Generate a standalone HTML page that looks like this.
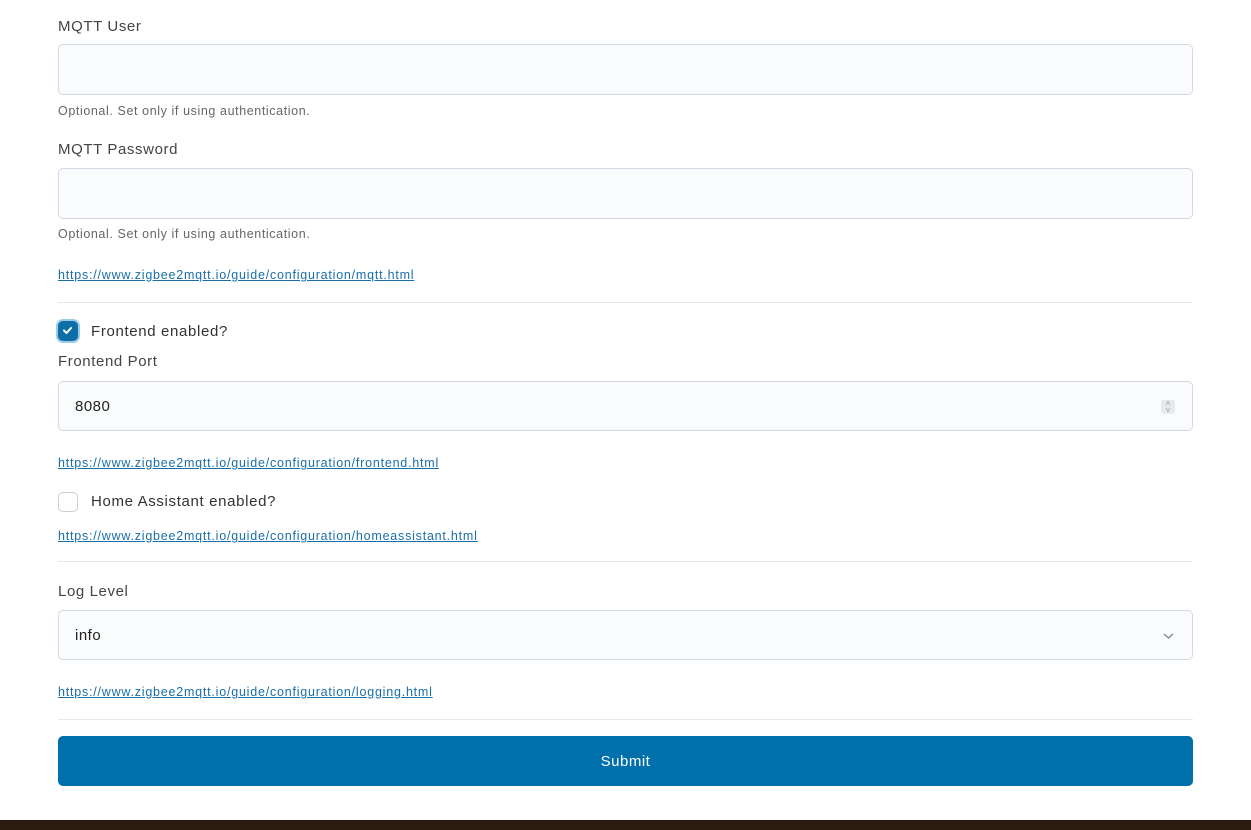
<!DOCTYPE html>
<html><head><style>
*{box-sizing:border-box;margin:0;padding:0}
body{width:1251px;height:830px;background:#fff;position:relative;overflow:hidden;font-family:"Liberation Sans",sans-serif;color:#3c3c3c}
.a{position:absolute;left:58px}
.lbl{font-size:15px;color:#444;line-height:18px;letter-spacing:0.6px}
.inp{width:1135px;height:51px;border:1px solid #d3d8e6;border-radius:5px;background:#fafbfc;font-size:15px;color:#222;padding:0 16px;line-height:51px;letter-spacing:0.5px}
.help{font-size:12.5px;color:#666;line-height:14px;letter-spacing:0.6px}
.lnk{font-size:12.5px;color:#1a6ea8;text-decoration:underline;line-height:14px;letter-spacing:0.78px}
.hr{width:1135px;height:1px;background:#e8e8ec}
.cb{width:20px;height:20px;border-radius:5px;border:1.5px solid #c8cdd8;background:#fff}
.cbl{position:absolute;left:91px;font-size:15px;color:#333;line-height:18px;letter-spacing:0.65px}
</style></head><body>
<div class="a lbl" style="top:18px">MQTT User</div>
<div class="a inp" style="top:44px"></div>
<div class="a help" style="top:104px">Optional. Set only if using authentication.</div>
<div class="a lbl" style="top:141px">MQTT Password</div>
<div class="a inp" style="top:168px"></div>
<div class="a help" style="top:227px">Optional. Set only if using authentication.</div>
<div class="a lbl lnk" style="top:268px">https://www.zigbee2mqtt.io/guide/configuration/mqtt.html</div>
<div class="a hr" style="top:302px"></div>
<div class="a cb" style="top:321px;background:#0e6ea6;border-color:#0e6ea6;box-shadow:0 0 0 2px #9ccbe8"><svg width="17" height="17" viewBox="0 0 17 17"><path d="M5 8.5l2.5 2.5 4.5-5" stroke="#fff" stroke-width="2" fill="none" stroke-linecap="round" stroke-linejoin="round"/></svg></div>
<div class="cbl" style="top:323px">Frontend enabled?</div>
<div class="a lbl" style="top:353px">Frontend Port</div>
<div class="a inp" style="top:381px;height:50px;line-height:50px">8080
<div style="position:absolute;right:17px;top:18px;width:14px;height:14px;background:#e8e9ee;border-radius:2px;font-size:8px;color:#999;text-align:center;line-height:7px;letter-spacing:0">˄<br>˅</div></div>
<div class="a lnk" style="top:456px">https://www.zigbee2mqtt.io/guide/configuration/frontend.html</div>
<div class="a cb" style="top:492px"></div>
<div class="cbl" style="top:493px">Home Assistant enabled?</div>
<div class="a lnk" style="top:529px">https://www.zigbee2mqtt.io/guide/configuration/homeassistant.html</div>
<div class="a hr" style="top:561px"></div>
<div class="a lbl" style="top:583px">Log Level</div>
<div class="a inp" style="top:610px;height:50px;line-height:50px">info
<svg style="position:absolute;right:18px;top:21px" width="11" height="8" viewBox="0 0 11 8"><path d="M1 2l4.5 4 4.5-4" stroke="#888" stroke-width="1.4" fill="none"/></svg></div>
<div class="a lnk" style="top:685px">https://www.zigbee2mqtt.io/guide/configuration/logging.html</div>
<div class="a hr" style="top:719px"></div>
<div class="a" style="top:736px;width:1135px;height:50px;background:#0070ad;border-radius:5px;color:#fff;font-size:15px;text-align:center;line-height:51px;letter-spacing:0.5px">Submit</div>
<div style="position:absolute;left:0;top:820px;width:1251px;height:10px;background:#2a1a10"></div>
</body></html>
